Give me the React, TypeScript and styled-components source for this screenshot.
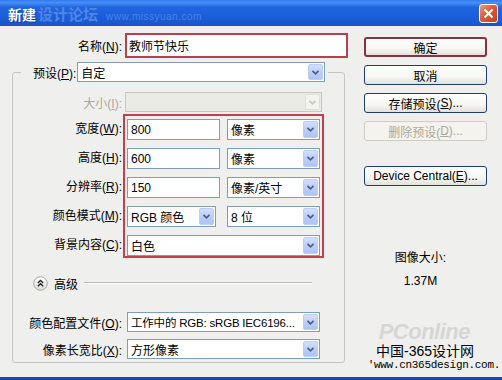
import React from "react";
import styled, { createGlobalStyle } from "styled-components";

const GlobalStyle = createGlobalStyle`
  html, body {
    margin: 0;
    padding: 0;
  }
  body {
    background: #efefed;
    font-family: "Liberation Sans", "Noto Sans CJK SC", sans-serif;
    font-size: 12px;
    color: #000;
  }
`;

const Chevron: React.FC<{ color: string }> = ({ color }) => (
  <svg width="15" height="15" viewBox="0 0 15 15">
    <path d="M4 5.5 L7.5 9 L11 5.5" stroke={color} strokeWidth="2" fill="none" />
  </svg>
);

interface IComboProps {
  width: number;
  height?: number;
  value?: string;
  disabled?: boolean;
  tight?: boolean;
}

const Combo: React.FC<IComboProps> = ({ width, height = 20, value, disabled, tight }) => (
  <ComboBox $width={width} $height={height} $disabled={!!disabled}>
    <ComboValue $tight={!!tight}>{value}</ComboValue>
    <DropButton $disabled={!!disabled}>
      <Chevron color={disabled ? "#c9c7ba" : "#4d6185"} />
    </DropButton>
  </ComboBox>
);

const App: React.FC = () => {
  return (
    <>
      <GlobalStyle />
      <Window>
        <TitleBar>
          <TitleText>
            新建
            <TitleMark>设计论坛</TitleMark>
            <TitleUrl>www.missyuan.com</TitleUrl>
          </TitleText>
          <CloseButton>
            <svg width="11" height="11" viewBox="0 0 11 11">
              <path d="M1.5 1.5 L9.5 9.5 M9.5 1.5 L1.5 9.5" stroke="#fff" strokeWidth="2" />
            </svg>
          </CloseButton>
        </TitleBar>

        <Body>
          <LeftPane>
            <NameRow>
              <Label $width={110}>
                名称(<u>N</u>):
              </Label>
              <NameInput>教师节快乐</NameInput>
            </NameRow>

            <Group>
              <Legend>
                <LegendInner>
                  <span>
                    预设(<u>P</u>):
                  </span>
                  <Combo width={248} value="自定" />
                </LegendInner>
              </Legend>

              <Row $top={10} $gap={3}>
                <Label $width={109} $disabled>
                  大小(<u>I</u>):
                </Label>
                <Combo width={197} disabled />
              </Row>

              <Row $top={2} $gap={1} $align="flex-start">
                <LabelStack>
                  <StackLabel>
                    宽度(<u>W</u>):
                  </StackLabel>
                  <StackLabel>
                    高度(<u>H</u>):
                  </StackLabel>
                  <StackLabel>
                    分辨率(<u>R</u>):
                  </StackLabel>
                  <StackLabel>
                    颜色模式(<u>M</u>):
                  </StackLabel>
                  <StackLabel>
                    背景内容(<u>C</u>):
                  </StackLabel>
                </LabelStack>
                <HighlightBox>
                  <ControlPair>
                    <TextInput>800</TextInput>
                    <Combo width={93} height={21} value="像素" />
                  </ControlPair>
                  <ControlPair>
                    <TextInput>600</TextInput>
                    <Combo width={93} height={21} value="像素" />
                  </ControlPair>
                  <ControlPair>
                    <TextInput>150</TextInput>
                    <Combo width={93} height={21} value="像素/英寸" />
                  </ControlPair>
                  <ControlPair>
                    <Combo width={89} height={21} value="RGB 颜色" />
                    <Combo width={93} height={21} value="8 位" />
                  </ControlPair>
                  <Combo width={193} height={21} value="白色" />
                </HighlightBox>
              </Row>

              <AdvancedRow>
                <svg width="15" height="15" viewBox="0 0 15 15">
                  <defs>
                    <linearGradient id="adv" x1="0" y1="0" x2="0" y2="1">
                      <stop offset="0" stopColor="#ffffff" />
                      <stop offset="1" stopColor="#dcdcd6" />
                    </linearGradient>
                  </defs>
                  <circle cx="7.5" cy="7.5" r="6.8" fill="url(#adv)" stroke="#a8a8a0" />
                  <path d="M4.8 7 L7.5 4.5 L10.2 7 M4.8 10.2 L7.5 7.7 L10.2 10.2" stroke="#222" strokeWidth="1.3" fill="none" />
                </svg>
                <span>高级</span>
                <Rule />
              </AdvancedRow>

              <Row $top={19} $gap={5}>
                <Label $width={109}>
                  颜色配置文件(<u>O</u>):
                </Label>
                <Combo width={193} value="工作中的 RGB: sRGB IEC6196..." tight />
              </Row>
              <Row $top={7} $gap={5}>
                <Label $width={109}>
                  像素长宽比(<u>X</u>):
                </Label>
                <Combo width={193} value="方形像素" />
              </Row>
            </Group>
          </LeftPane>

          <RightPane>
            <Button $default>确定</Button>
            <Button>取消</Button>
            <Button>
              存储预设(<u>S</u>)...
            </Button>
            <Button disabled>
              删除预设(<u>D</u>)...
            </Button>
            <Button $top={17}>
              Device Central(<u>E</u>)...
            </Button>
            <ImageInfo>
              <span>图像大小:</span>
              <span>1.37M</span>
            </ImageInfo>
          </RightPane>
        </Body>

        <Watermark>
          <WatermarkLogo>PConline</WatermarkLogo>
          <WatermarkTitle>中国-365设计网</WatermarkTitle>
          <WatermarkUrl>'www.cn365design.com.</WatermarkUrl>
        </Watermark>
      </Window>
    </>
  );
};

const Window = styled.div`
  position: relative;
  width: 502px;
  height: 380px;
  box-sizing: border-box;
  display: flex;
  flex-direction: column;
  background: #efefed;
  border-bottom: 3px solid #1b47a8;
  overflow: hidden;
`;

const TitleBar = styled.div`
  height: 26px;
  flex-shrink: 0;
  display: flex;
  align-items: center;
  justify-content: space-between;
  padding: 0 4px 0 8px;
  background: linear-gradient(
    #2f7af2 0%,
    #4a8ef6 10%,
    #2066e0 28%,
    #1b5cd8 70%,
    #1a55c8 100%
  );
`;

const TitleText = styled.div`
  display: flex;
  align-items: baseline;
  color: #fff;
  font-size: 14px;
  font-weight: bold;
  text-shadow: 1px 1px 0 #0c3a9a;
`;

const TitleMark = styled.span`
  margin-left: 2px;
  font-size: 15px;
  font-weight: bold;
  color: #4f86e6;
  text-shadow: none;
`;

const TitleUrl = styled.span`
  margin-left: 8px;
  font-size: 10px;
  font-weight: normal;
  color: #4a82e4;
  text-shadow: none;
  letter-spacing: 0.5px;
`;

const CloseButton = styled.div`
  width: 19px;
  height: 19px;
  box-sizing: border-box;
  display: flex;
  align-items: center;
  justify-content: center;
  border: 1px solid #fff;
  border-radius: 3px;
  background: linear-gradient(135deg, #f09a80 0%, #e05a38 45%, #c8401e 100%);
`;

const Body = styled.div`
  flex: 1;
  display: flex;
`;

const LeftPane = styled.div`
  width: 348px;
  box-sizing: border-box;
  padding: 7px 0 0 12px;
  display: flex;
  flex-direction: column;
`;

const NameRow = styled.div`
  display: flex;
  align-items: center;
  gap: 3px;
  height: 25px;
`;

const Label = styled.div<{ $width: number; $disabled?: boolean }>`
  width: ${({ $width }) => $width}px;
  flex-shrink: 0;
  text-align: right;
  white-space: nowrap;
  color: ${({ $disabled }) => ($disabled ? "#aca899" : "#000")};
`;

const NameInput = styled.div`
  width: 223px;
  height: 25px;
  box-sizing: border-box;
  border: 2px solid #b6404c;
  background: #fff;
  padding-left: 2px;
  display: flex;
  align-items: center;
`;

const Group = styled.fieldset`
  margin: 4px 0 0;
  width: 333px;
  box-sizing: border-box;
  padding: 0 0 3px;
  border: 1px solid #c6c6c0;
  border-radius: 3px;
  min-width: 0;
`;

const Legend = styled.legend`
  margin-left: 8px;
  padding: 0 3px 0 12px;
`;

const LegendInner = styled.div`
  display: flex;
  align-items: center;
  gap: 1px;
`;

const Row = styled.div<{ $top: number; $gap: number; $align?: string }>`
  display: flex;
  align-items: ${({ $align }) => $align || "center"};
  gap: ${({ $gap }) => $gap}px;
  margin-top: ${({ $top }) => $top}px;
`;

const LabelStack = styled.div`
  width: 109px;
  flex-shrink: 0;
  padding-top: 5px;
  display: flex;
  flex-direction: column;
  gap: 8px;
`;

const StackLabel = styled.div`
  height: 21px;
  line-height: 21px;
  text-align: right;
  white-space: nowrap;
`;

const HighlightBox = styled.div`
  width: 201px;
  box-sizing: border-box;
  border: 2px solid #c0414c;
  padding: 3px 2px 0;
  display: flex;
  flex-direction: column;
  gap: 8px;
`;

const ControlPair = styled.div`
  display: flex;
  justify-content: space-between;
`;

const TextInput = styled.div`
  width: 93px;
  height: 21px;
  box-sizing: border-box;
  border: 1px solid #7f9db9;
  background: #fff;
  padding-left: 3px;
  display: flex;
  align-items: center;
`;

const ComboBox = styled.div<{ $width: number; $height: number; $disabled: boolean }>`
  width: ${({ $width }) => $width}px;
  height: ${({ $height }) => $height}px;
  box-sizing: border-box;
  flex-shrink: 0;
  display: flex;
  align-items: stretch;
  border: 1px solid ${({ $disabled }) => ($disabled ? "#c9c7ba" : "#7f9db9")};
  background: ${({ $disabled }) => ($disabled ? "#ebebe6" : "#fff")};
`;

const ComboValue = styled.span<{ $tight: boolean }>`
  flex: 1;
  min-width: 0;
  padding-left: 3px;
  display: flex;
  align-items: center;
  white-space: nowrap;
  overflow: hidden;
  font-size: ${({ $tight }) => ($tight ? "11.5px" : "12px")};
  letter-spacing: ${({ $tight }) => ($tight ? "-0.2px" : "0")};
`;

const DropButton = styled.div<{ $disabled: boolean }>`
  width: 15px;
  flex-shrink: 0;
  margin: 1px;
  box-sizing: border-box;
  display: flex;
  align-items: center;
  justify-content: center;
  border-radius: 2px;
  border: 1px solid ${({ $disabled }) => ($disabled ? "#e0e0da" : "#bccdf6")};
  background: ${({ $disabled }) =>
    $disabled
      ? "#f2f2ee"
      : "linear-gradient(#d2defc 0%, #bccff9 50%, #aec4f4 100%)"};
`;

const AdvancedRow = styled.div`
  height: 20px;
  margin-top: 15px;
  padding: 0 32px 0 20px;
  display: flex;
  align-items: center;
  gap: 6px;
`;

const Rule = styled.div`
  flex: 1;
  height: 1px;
  background: #b8b8b2;
  border-bottom: 1px solid #fff;
`;

const RightPane = styled.div`
  width: 123px;
  margin-left: 16px;
  padding-top: 11px;
  display: flex;
  flex-direction: column;
  gap: 8px;
`;

const Button = styled.div<{ $default?: boolean; $top?: number; disabled?: boolean }>`
  height: 20px;
  box-sizing: border-box;
  margin-top: ${({ $top }) => $top || 0}px;
  display: flex;
  align-items: center;
  justify-content: center;
  border-radius: 3px;
  white-space: nowrap;
  border: ${({ $default, disabled }) =>
    $default ? "2px solid #8a3042" : disabled ? "1px solid #cfcdc2" : "1px solid #1e3f6e"};
  color: ${({ disabled }) => (disabled ? "#aca899" : "#000")};
  background: ${({ disabled }) =>
    disabled
      ? "#f4f3ee"
      : "linear-gradient(#ffffff 0%, #f6f6f3 60%, #e2e1da 100%)"};
`;

const ImageInfo = styled.div`
  margin-top: 56px;
  padding-right: 10px;
  display: flex;
  flex-direction: column;
  align-items: center;
  gap: 7px;
  line-height: 16px;
`;

const Watermark = styled.div`
  position: absolute;
  right: 2px;
  bottom: 5px;
  display: flex;
  flex-direction: column;
  align-items: flex-end;
`;

const WatermarkLogo = styled.div`
  margin-right: 30px;
  margin-bottom: 2px;
  font-size: 22px;
  font-weight: bold;
  font-style: italic;
  line-height: 18px;
  color: rgba(190, 190, 190, 0.5);
  letter-spacing: -0.5px;
`;

const WatermarkTitle = styled.div`
  margin-right: 26px;
  font-size: 14px;
  line-height: 16px;
`;

const WatermarkUrl = styled.div`
  font-family: "Liberation Mono", monospace;
  font-size: 11px;
  line-height: 13px;
  letter-spacing: -0.3px;
`;

export default App;
